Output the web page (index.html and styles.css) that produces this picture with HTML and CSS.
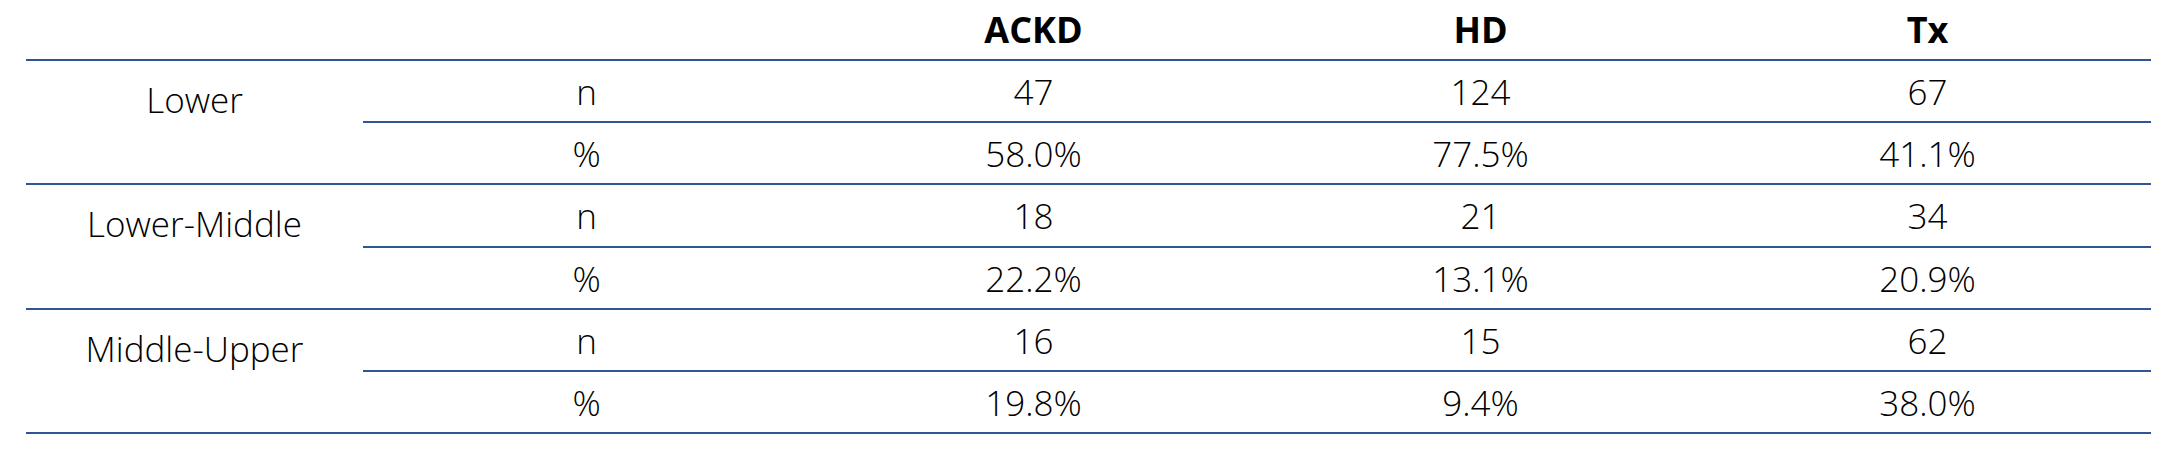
FILE: index.html
```html
<!DOCTYPE html>
<html lang="en">
<head>
<meta charset="utf-8">
<title>Income level by group</title>
<link rel="stylesheet" href="styles.css">
</head>
<body>
<table class="stats">
  <colgroup>
    <col class="c-group">
    <col class="c-stat">
    <col class="c-val">
    <col class="c-val">
    <col class="c-val">
  </colgroup>
  <thead>
    <tr class="head">
      <th></th>
      <th></th>
      <th>ACKD</th>
      <th>HD</th>
      <th>Tx</th>
    </tr>
  </thead>
  <tbody>
    <tr class="row-n">
      <td class="group" rowspan="2">Lower</td>
      <td>n</td><td>47</td><td>124</td><td>67</td>
    </tr>
    <tr class="row-p">
      <td>%</td><td>58.0%</td><td>77.5%</td><td>41.1%</td>
    </tr>
    <tr class="row-n">
      <td class="group" rowspan="2">Lower-Middle</td>
      <td>n</td><td>18</td><td>21</td><td>34</td>
    </tr>
    <tr class="row-p">
      <td>%</td><td>22.2%</td><td>13.1%</td><td>20.9%</td>
    </tr>
    <tr class="row-n">
      <td class="group" rowspan="2">Middle-Upper</td>
      <td>n</td><td>16</td><td>15</td><td>62</td>
    </tr>
    <tr class="row-p">
      <td>%</td><td>19.8%</td><td>9.4%</td><td>38.0%</td>
    </tr>
  </tbody>
</table>
</body>
</html>
```
FILE: styles.css
```css
html, body {
  margin: 0;
  padding: 0;
  background: #ffffff;
}

body {
  padding-left: 26px;
}

.stats {
  border-collapse: collapse;
  table-layout: fixed;
  width: 2125px;
  font-family: "Open Sans", "Noto Sans", sans-serif;
  font-weight: 300;
  font-stretch: 88%;
  font-size: 35px;
  line-height: 40px;
  color: #000000;
}

.c-group { width: 337px; }
.c-stat, .c-val { width: 447px; }

.stats th,
.stats td {
  padding: 0;
  text-align: center;
  vertical-align: middle;
}

.head th {
  height: 59px;
  font-weight: 700;
  font-size: 36px;
  border-bottom: 2px solid #2f5597;
}

.stats td {
  height: 62.2px;
  padding-top: 2px;
  box-sizing: border-box;
}

.row-n td,
.row-p td {
  border-bottom: 2px solid #2f5597;
}

.stats td.group {
  vertical-align: top;
  padding-top: 19px;
  border-bottom: 2px solid #2f5597;
}
```
